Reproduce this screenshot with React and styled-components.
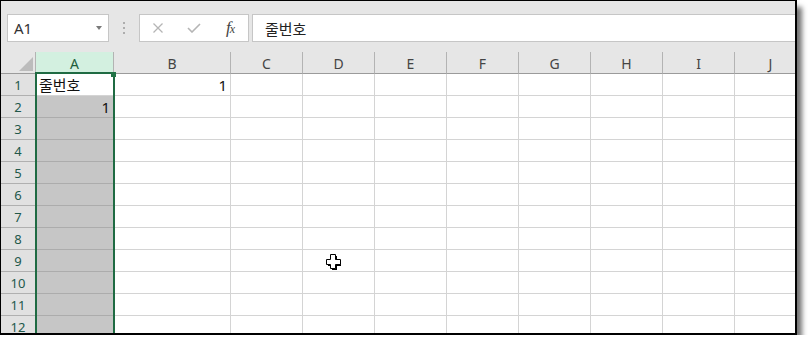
import React from "react";
import styled, { createGlobalStyle } from "styled-components";

const GlobalStyle = createGlobalStyle`
	body {
		margin: 0;
		background: #fff;
	}
`;

const UI_FONT = `"Noto Sans", "Open Sans", sans-serif`;
const KR_FONT = `"Noto Sans", "Noto Sans CJK KR", sans-serif`;
const GREEN = "#217346";

const Window = styled.div`
	position: relative;
	width: 797px;
	height: 335px;
	box-sizing: border-box;
	border-style: solid;
	border-color: #000;
	border-width: 1px 2px 2px 1px;
	background: #e6e6e6;
	box-shadow: 6px 6px 5px -1px rgba(0, 0, 0, 0.55);
	overflow: hidden;
	display: flex;
	flex-direction: column;
`;

const FormulaBar = styled.div`
	height: 51px;
	flex: none;
	box-sizing: border-box;
	padding: 13px 0 0 6px;
	display: flex;
	align-items: flex-start;
`;

const Box = styled.div`
	height: 28px;
	box-sizing: border-box;
	border: 1px solid #c6c6c6;
	background: #fff;
	display: flex;
	align-items: center;
`;

const NameBox = styled(Box)`
	width: 102px;
	padding: 0 6px;
	justify-content: space-between;
	font: 15px ${UI_FONT};
	color: #333;
`;

const DropArrow = styled.span`
	width: 0;
	height: 0;
	border-left: 3px solid transparent;
	border-right: 3px solid transparent;
	border-top: 4px solid #7a7a7a;
`;

const Grip = styled.div`
	width: 30px;
	height: 28px;
	display: flex;
	flex-direction: column;
	align-items: center;
	justify-content: center;
	gap: 3px;
	span {
		width: 2px;
		height: 2px;
		background: #adadad;
	}
`;

const ButtonGroup = styled(Box)`
	width: 110px;
`;

const ToolButton = styled.div`
	width: 36px;
	height: 100%;
	display: flex;
	align-items: center;
	justify-content: center;
	color: ${p => (p.$dim ? "#b5b5b5" : "#555")};
`;

const Fx = styled.span`
	font: italic 17px "Liberation Serif", serif;
	color: #444;
	letter-spacing: -1px;
	small {
		font-size: 12px;
	}
`;

const FormulaInput = styled(Box)`
	flex: 1;
	margin-left: 3px;
	margin-right: -1px;
	padding-left: 12px;
	font: 15px ${KR_FONT};
	color: #222;
`;

const Sheet = styled.div`
	position: relative;
	flex: 1;
	display: grid;
	grid-template-columns: 35px 78px 117px repeat(8, 72px);
	grid-auto-rows: 22px;
`;

const Corner = styled.div`
	box-sizing: border-box;
	border-right: 1px solid #b3b3b3;
	border-bottom: 1px solid #9b9b9b;
	display: flex;
	justify-content: flex-end;
	align-items: flex-end;
	padding: 0 2px 2px 0;
	&::after {
		content: "";
		width: 0;
		height: 0;
		border-left: 14px solid transparent;
		border-bottom: 14px solid #bcbcbc;
	}
`;

const ColHeader = styled.div`
	box-sizing: border-box;
	border-right: 1px solid #b3b3b3;
	border-bottom: 1px solid #9b9b9b;
	background: ${p => (p.$selected ? "#d3f0e0" : "#e6e6e6")};
	color: ${p => (p.$selected ? "#1e5e3c" : "#444")};
	font: 14px ${UI_FONT};
	display: flex;
	align-items: center;
	justify-content: center;
	padding-top: 1px;
`;

const RowHeader = styled.div`
	box-sizing: border-box;
	border-right: 1px solid #9b9b9b;
	border-bottom: 1px solid #b0b0b0;
	background: #e1e1e1;
	color: #22584a;
	font: 13px ${UI_FONT};
	display: flex;
	align-items: center;
	justify-content: center;
`;

const Cell = styled.div`
	box-sizing: border-box;
	border-right: 1px solid ${p => (p.$selected ? "#acacac" : "#d4d4d4")};
	border-bottom: 1px solid ${p => (p.$selected ? "#acacac" : "#d4d4d4")};
	background: ${p => (p.$selected ? "#c6c6c6" : "#fff")};
	color: #111;
	font: 15px ${KR_FONT};
	display: flex;
	align-items: center;
	justify-content: ${p => (p.$num ? "flex-end" : "flex-start")};
	padding: 0 3px;
	white-space: nowrap;
`;

const Selection = styled.div`
	position: absolute;
	left: 34px;
	top: 20px;
	width: 80px;
	height: 300px;
	box-sizing: border-box;
	border: 2px solid #1f6b43;
	pointer-events: none;
`;

const FillHandle = styled.div`
	position: absolute;
	left: 74px;
	top: -2px;
	width: 5px;
	height: 5px;
	background: ${GREEN};
`;

const Cursor = styled.svg`
	position: absolute;
	left: 325px;
	top: 202px;
`;

const columns = ["A", "B", "C", "D", "E", "F", "G", "H", "I", "J"];
const rows = [1, 2, 3, 4, 5, 6, 7, 8, 9, 10, 11, 12];
const values = { A1: "줄번호", B1: 1, A2: 1 };

const App = () => {
	return (
		<>
			<GlobalStyle />
			<Window>
				<FormulaBar>
					<NameBox>
						<span>A1</span>
						<DropArrow />
					</NameBox>
					<Grip>
						<span />
						<span />
						<span />
					</Grip>
					<ButtonGroup>
						<ToolButton $dim>
							<svg width="12" height="12" viewBox="0 0 12 12">
								<path d="M1.5 1.5 L10.5 10.5 M10.5 1.5 L1.5 10.5" stroke="currentColor" strokeWidth="1.3" fill="none" />
							</svg>
						</ToolButton>
						<ToolButton $dim>
							<svg width="14" height="10" viewBox="0 0 14 10">
								<path d="M1 5 L5 9 L13 1" stroke="currentColor" strokeWidth="1.6" fill="none" />
							</svg>
						</ToolButton>
						<ToolButton>
							<Fx>f<small>x</small></Fx>
						</ToolButton>
					</ButtonGroup>
					<FormulaInput>줄번호</FormulaInput>
				</FormulaBar>

				<Sheet>
					<Corner />
					{columns.map(col => (
						<ColHeader key={col} $selected={col === "A"}>{col}</ColHeader>
					))}
					{rows.map(row => (
						<React.Fragment key={row}>
							<RowHeader>{row}</RowHeader>
							{columns.map(col => {
								const v = values[col + row];
								return (
									<Cell
										key={col}
										$selected={col === "A" && row !== 1}
										$num={typeof v === "number"}
									>
										{v}
									</Cell>
								);
							})}
						</React.Fragment>
					))}
					<Selection>
						<FillHandle />
					</Selection>
					<Cursor width="16" height="16" viewBox="0 0 16 16">
						<polygon points="6,2 11,2 11,7 15,7 15,12 11,12 11,16 6,16 6,12 2,12 2,7 6,7" fill="#000" />
						<polygon points="4.5,0.5 9.5,0.5 9.5,5.5 14.5,5.5 14.5,10.5 9.5,10.5 9.5,14.5 4.5,14.5 4.5,10.5 0.5,10.5 0.5,5.5 4.5,5.5" fill="#fff" stroke="#000" strokeWidth="1" />
					</Cursor>
				</Sheet>
			</Window>
		</>
	);
};

export default App;
